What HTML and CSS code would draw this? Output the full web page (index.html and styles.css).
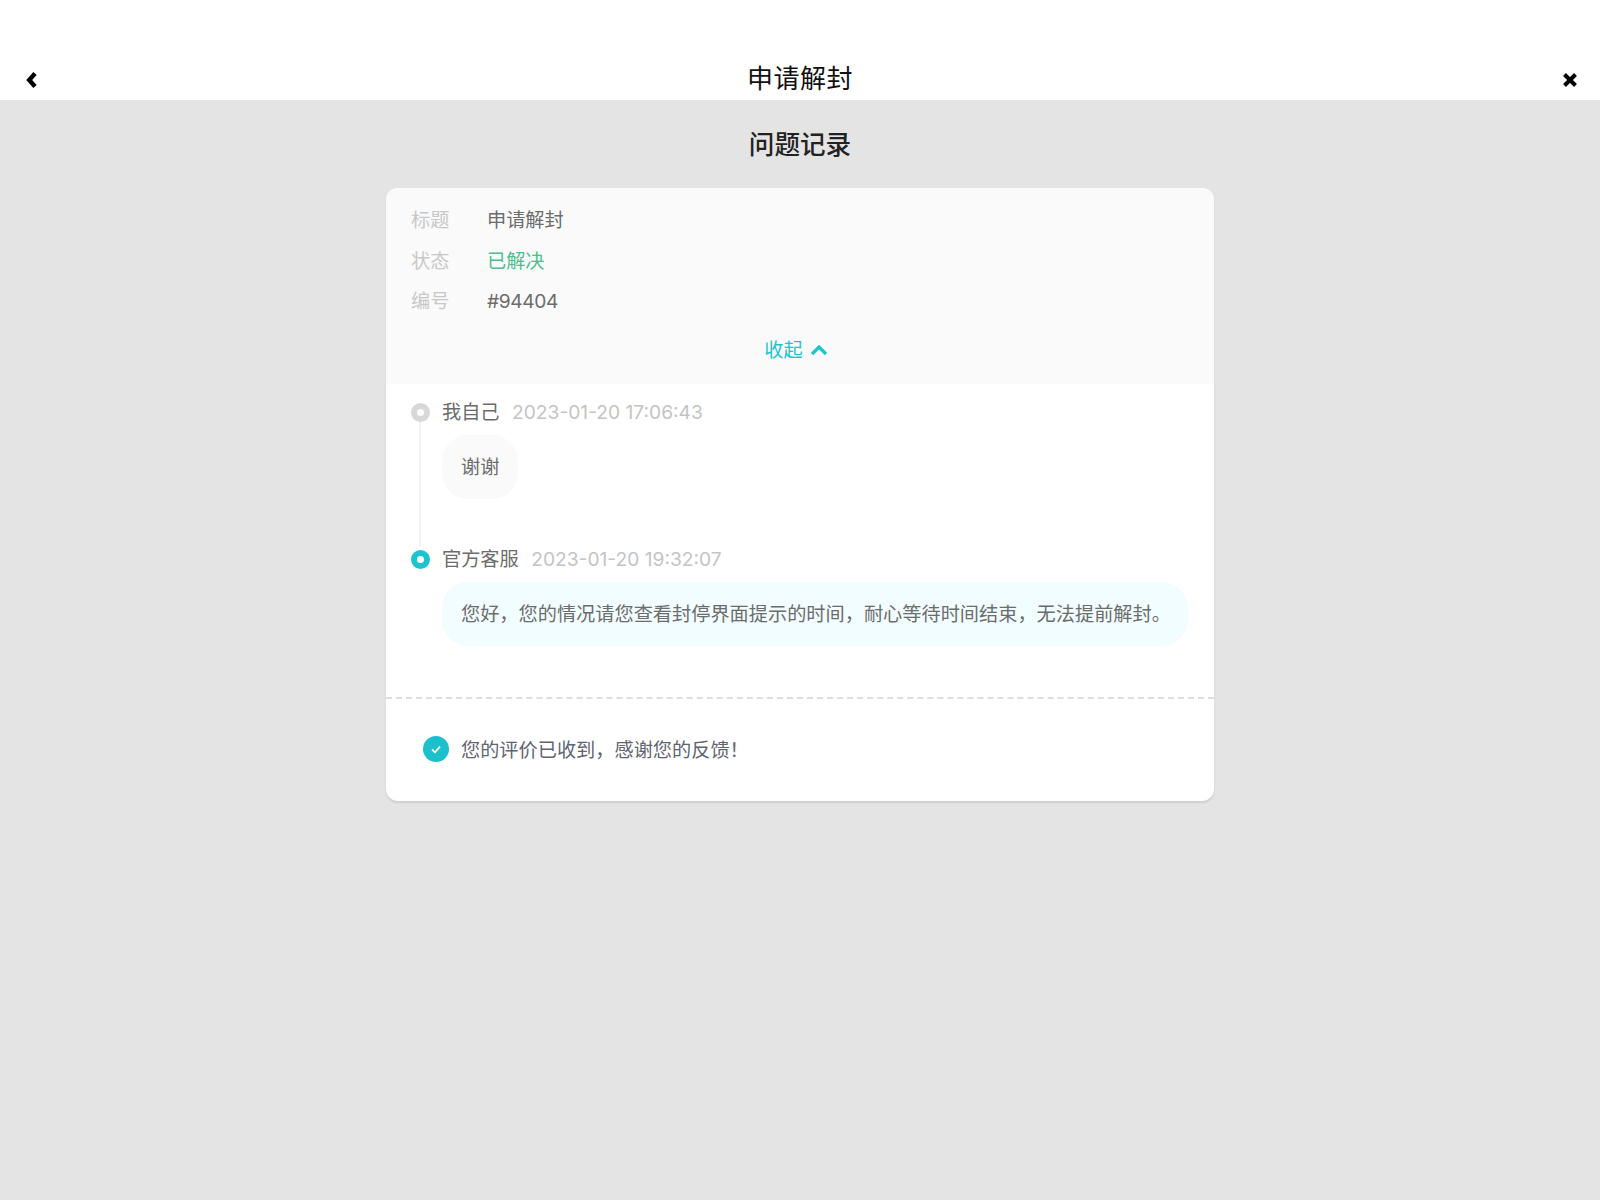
FILE: index.html
```html
<!DOCTYPE html>
<html lang="zh-CN">
<head>
<meta charset="utf-8">
<title>申请解封</title>
<link rel="stylesheet" href="styles.css">
</head>
<body>
<header class="topbar">
  <svg class="nav-icon" width="14" height="18" viewBox="0 0 14 18"><path d="M10 2.500 4.200 9l5.800 6.500" fill="none" stroke="#000" stroke-width="4.400"/></svg>
  <h1 class="topbar-title">申请解封</h1>
  <svg class="nav-icon" width="18" height="18" viewBox="0 0 18 18"><path d="M3.500 3.500 14.500 14.500M14.500 3.500 3.500 14.500" fill="none" stroke="#000" stroke-width="4"/></svg>
</header>
<main class="page">
  <h2 class="page-title">问题记录</h2>
  <section class="card">
    <div class="info">
      <div class="info-row"><span class="info-label">标题</span><span class="info-value">申请解封</span></div>
      <div class="info-row"><span class="info-label">状态</span><span class="info-value solved">已解决</span></div>
      <div class="info-row"><span class="info-label">编号</span><span class="info-value number">#94404</span></div>
      <div class="collapse">收起<svg width="18" height="12" viewBox="0 0 18 12"><path d="M2 10 9 3l7 7" fill="none" stroke="#1cc4d0" stroke-width="3.200"/></svg></div>
    </div>
    <div class="timeline">
      <article class="entry first">
        <div class="entry-head"><span class="dot grey"></span><span class="name">我自己</span><span class="time">2023-01-20 17:06:43</span></div>
        <div class="bubble">谢谢</div>
      </article>
      <article class="entry">
        <div class="entry-head"><span class="dot teal"></span><span class="name">官方客服</span><span class="time">2023-01-20 19:32:07</span></div>
        <div class="bubble official">您好，您的情况请您查看封停界面提示的时间，耐心等待时间结束，无法提前解封。</div>
      </article>
    </div>
    <div class="feedback">
      <svg width="26" height="26" viewBox="0 0 26 26"><circle cx="13" cy="13" r="13" fill="#1cc0cc"/><path d="M9 13.500l3 2.800 5-5.600" fill="none" stroke="#fff" stroke-width="1.800"/></svg>
      <span>您的评价已收到，感谢您的反馈！</span>
    </div>
  </section>
</main>
</body>
</html>
```
FILE: styles.css
```css
* { box-sizing: border-box; }
html, body { margin: 0; padding: 0; height: 100%; }
body {
  background: #e4e4e4;
  font-family: Inter, "Noto Sans CJK SC", sans-serif;
  font-size: 19.2px;
  color: #606266;
}
.topbar {
  height: 100px;
  background: #fff;
  display: flex;
  align-items: flex-end;
  justify-content: space-between;
  padding: 0 21px 3px 25px;
}
.topbar-title {
  margin: 0;
  font-size: 26px;
  line-height: 36px;
  font-weight: 400;
  color: #111;
  letter-spacing: 0.5px;
}
.nav-icon { display: block; margin-bottom: 8px; }
.page-title {
  margin: 0;
  padding-top: 28px;
  height: 88px;
  text-align: center;
  font-size: 25.6px;
  line-height: 34px;
  font-weight: 500;
  color: #222;
}
.card {
  width: 828px;
  height: 613px;
  margin: 0 auto;
  background: #fff;
  border-radius: 12px;
  overflow: hidden;
  box-shadow: 0 2px 2px rgba(0,0,0,.1);
}
.info {
  height: 196px;
  background: #fafafa;
  padding: 12px 26px 0 25px;
}
.info-row {
  display: flex;
  height: 40.500px;
  line-height: 40.500px;
}
.info-label { width: 76px; color: #c8c8c8; }
.info-value { color: #6c6c6c; }
.number { letter-spacing: -0.4px; }
.solved { color: #4cbf8c; }
.collapse {
  margin-top: 14px;
  display: flex;
  justify-content: center;
  align-items: center;
  gap: 7px;
  color: #1cc4d0;
  padding-right: 7px;
  line-height: 28px;
}
.timeline { padding: 16px 26px 0 25px; height: 315px; border-bottom: 2px dashed #dedede; }
.entry { position: relative; padding-left: 31px; }
.entry.first { height: 147px; }
.entry.first::before {
  content: "";
  position: absolute;
  left: 8px;
  top: 18px;
  bottom: 0;
  width: 2px;
  background: #f2f2f2;
}
.entry-head {
  display: flex;
  align-items: baseline;
  gap: 12.500px;
  height: 24px;
  line-height: 24px;
}
.name { color: #6c6c6c; }
.time { color: #c4c4c4; }
.dot {
  position: absolute;
  left: 0;
  top: 3px;
  width: 19px;
  height: 19px;
  border-radius: 50%;
  border: 6px solid #d8d8d8;
  background: #fff;
}
.dot.teal { border-color: #1cc4d0; }
.bubble {
  display: inline-block;
  margin-top: 11px;
  height: 64px;
  line-height: 64px;
  padding: 0 19px;
  border-radius: 26px;
  background: #fafafa;
  color: #6c6c6c;
}
.bubble.official { display: block; background: #f1fdfe; white-space: nowrap; padding-right: 0; }
.feedback {
  display: flex;
  align-items: center;
  gap: 12px;
  padding: 36px 0 0 37px;
  color: #5f6470;
}
```
